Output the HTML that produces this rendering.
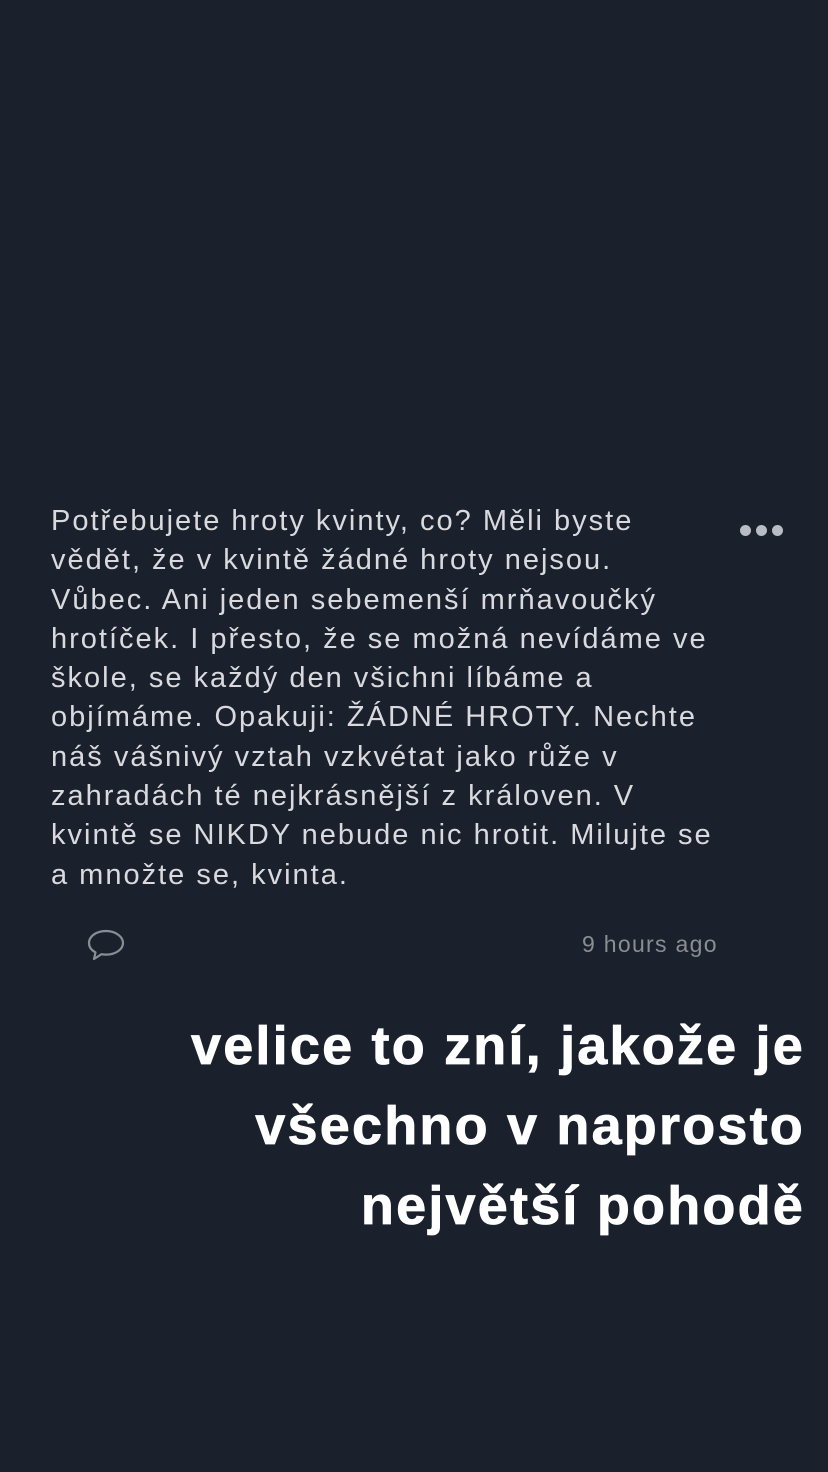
<!DOCTYPE html>
<html><head><meta charset="utf-8"><style>
body{margin:0;width:828px;height:1472px;background:#1b212c;overflow:hidden;position:relative;font-family:"Liberation Sans",sans-serif}
.t{position:absolute;left:51px;color:#d9d9de;font-size:29px;letter-spacing:2px;white-space:nowrap;line-height:39.3px;top:502px}
.c{position:absolute;right:23px;top:1006px;color:#fff;font-weight:bold;font-size:54px;line-height:80px;text-align:right;white-space:nowrap;letter-spacing:2.2px;-webkit-text-stroke:0.8px #fff}
.dots{position:absolute;left:740px;top:523px}
.dots i{display:inline-block;width:11px;height:11px;border-radius:50%;background:#b9bcc3;margin-right:5px}
.time{position:absolute;left:582px;top:931px;color:#8a8d94;font-size:23px;letter-spacing:1.3px}
</style></head><body>
<div class="t">Potřebujete hroty kvinty, co? Měli byste<br>vědět, že v kvintě žádné hroty nejsou.<br>Vůbec. Ani jeden sebemenší mrňavoučký<br>hrotíček. I přesto, že se možná nevídáme ve<br>škole, se každý den všichni líbáme a<br>objímáme. Opakuji: ŽÁDNÉ HROTY. Nechte<br>náš vášnivý vztah vzkvétat jako růže v<br>zahradách té nejkrásnější z královen. V<br>kvintě se NIKDY nebude nic hrotit. Milujte se<br>a množte se, kvinta.</div>
<div class="dots"><i></i><i></i><i></i></div>
<svg style="position:absolute;left:86px;top:928px" width="40" height="34" viewBox="0 0 40 34"><path d="M20 3C10 3 3 8.5 3 15c0 4 2.5 7.3 6.5 9.4L8 31l7.5-4.8c1.4.3 2.9.4 4.5.4 10 0 17-5.5 17-11.6S30 3 20 3z" fill="none" stroke="#8a8d94" stroke-width="2.2" stroke-linejoin="round"/></svg>
<div class="time">9 hours ago</div>
<div class="c">velice to zní, jakože je<br>všechno v naprosto<br>největší pohodě</div>
</body></html>
